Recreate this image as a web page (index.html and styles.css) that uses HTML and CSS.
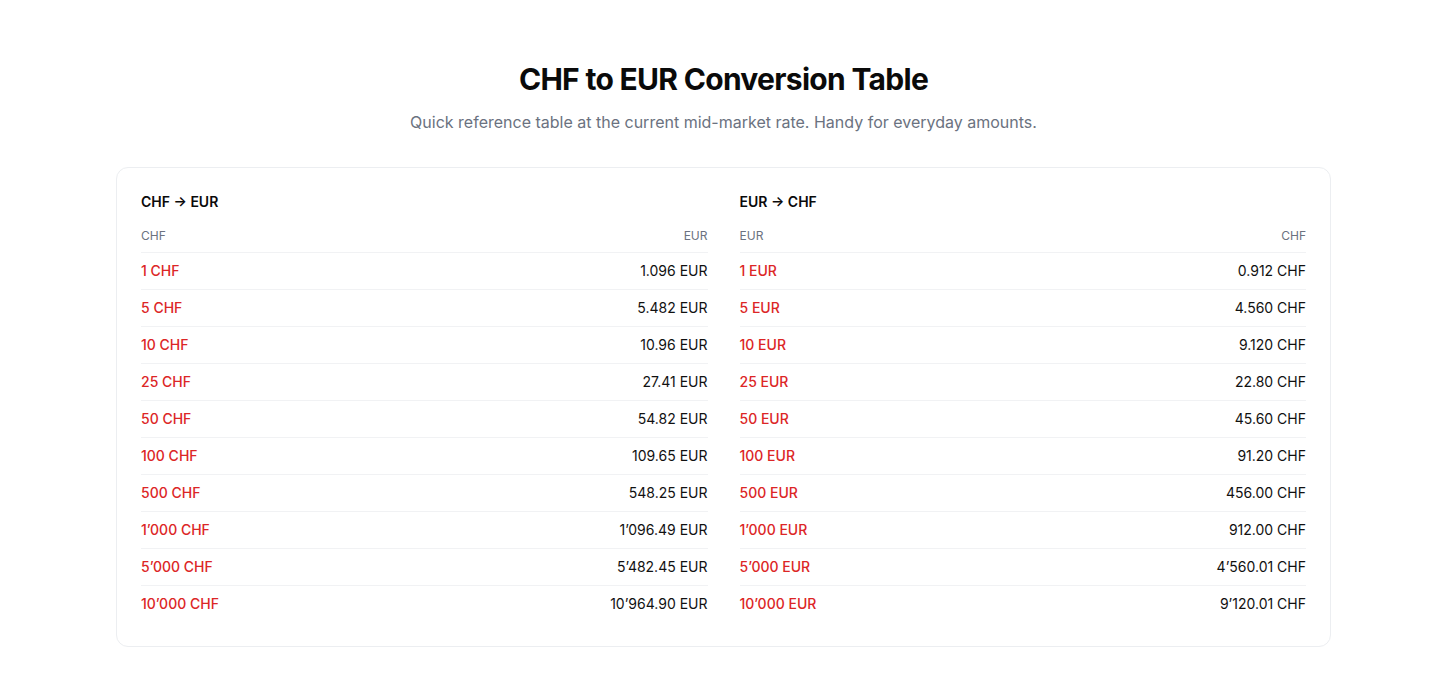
FILE: index.html
```html
<!DOCTYPE html>
<html lang="en">
<head>
<meta charset="utf-8">
<title>CHF to EUR Conversion Table</title>
<link rel="stylesheet" href="styles.css">
</head>
<body>
<main class="page">
  <header class="intro">
    <h1 class="title">CHF to EUR Conversion Table</h1>
    <p class="subtitle">Quick reference table at the current mid-market rate. Handy for everyday amounts.</p>
  </header>
  <section class="card">
    <div class="col">
      <h2 class="col-title">CHF → EUR</h2>
      <div class="row head"><span>CHF</span><span>EUR</span></div>
      <div class="row"><span class="from">1 CHF</span><span>1.096 EUR</span></div>
      <div class="row"><span class="from">5 CHF</span><span>5.482 EUR</span></div>
      <div class="row"><span class="from">10 CHF</span><span>10.96 EUR</span></div>
      <div class="row"><span class="from">25 CHF</span><span>27.41 EUR</span></div>
      <div class="row"><span class="from">50 CHF</span><span>54.82 EUR</span></div>
      <div class="row"><span class="from">100 CHF</span><span>109.65 EUR</span></div>
      <div class="row"><span class="from">500 CHF</span><span>548.25 EUR</span></div>
      <div class="row"><span class="from">1’000 CHF</span><span>1’096.49 EUR</span></div>
      <div class="row"><span class="from">5’000 CHF</span><span>5’482.45 EUR</span></div>
      <div class="row"><span class="from">10’000 CHF</span><span>10’964.90 EUR</span></div>
    </div>
    <div class="col">
      <h2 class="col-title">EUR → CHF</h2>
      <div class="row head"><span>EUR</span><span>CHF</span></div>
      <div class="row"><span class="from">1 EUR</span><span>0.912 CHF</span></div>
      <div class="row"><span class="from">5 EUR</span><span>4.560 CHF</span></div>
      <div class="row"><span class="from">10 EUR</span><span>9.120 CHF</span></div>
      <div class="row"><span class="from">25 EUR</span><span>22.80 CHF</span></div>
      <div class="row"><span class="from">50 EUR</span><span>45.60 CHF</span></div>
      <div class="row"><span class="from">100 EUR</span><span>91.20 CHF</span></div>
      <div class="row"><span class="from">500 EUR</span><span>456.00 CHF</span></div>
      <div class="row"><span class="from">1’000 EUR</span><span>912.00 CHF</span></div>
      <div class="row"><span class="from">5’000 EUR</span><span>4’560.01 CHF</span></div>
      <div class="row"><span class="from">10’000 EUR</span><span>9’120.01 CHF</span></div>
    </div>
  </section>
</main>
</body>
</html>
```
FILE: styles.css
```css
* { box-sizing: border-box; }
html, body { margin: 0; padding: 0; background: #fff; }
body {
  font-family: Inter, "Noto Sans", "Liberation Sans", sans-serif;
  color: #111111;
}
.page {
  padding: 61px 98px 40px 116px;
}
.intro { text-align: center; }
.title {
  margin: 0;
  font-size: 30px;
  line-height: 36px;
  font-weight: 700;
  letter-spacing: -0.7px;
  color: #0a0a0a;
}
.subtitle {
  margin: 13px 0 0;
  font-size: 16px;
  line-height: 24px;
  color: #6b7280;
}
.card {
  margin-top: 33px;
  width: 1215px;
  border: 1px solid #eceef1;
  border-radius: 12px;
  padding: 24px;
  display: grid;
  grid-template-columns: 1fr 1fr;
  column-gap: 32px;
}
.col-title {
  margin: 0 0 8px;
  font-size: 14px;
  line-height: 20px;
  font-weight: 600;
  color: #0a0a0a;
}
.row {
  display: flex;
  justify-content: space-between;
  font-size: 14px;
  line-height: 20px;
  padding: 8px 0;
  border-bottom: 1px solid #f1f2f4;
  color: #111111;
}
.row:last-child { border-bottom: none; }
.row.head {
  font-size: 12px;
  line-height: 16px;
  color: #6b7280;
  font-weight: 400;
}
.from { color: #dc2626; font-weight: 500; }
```
